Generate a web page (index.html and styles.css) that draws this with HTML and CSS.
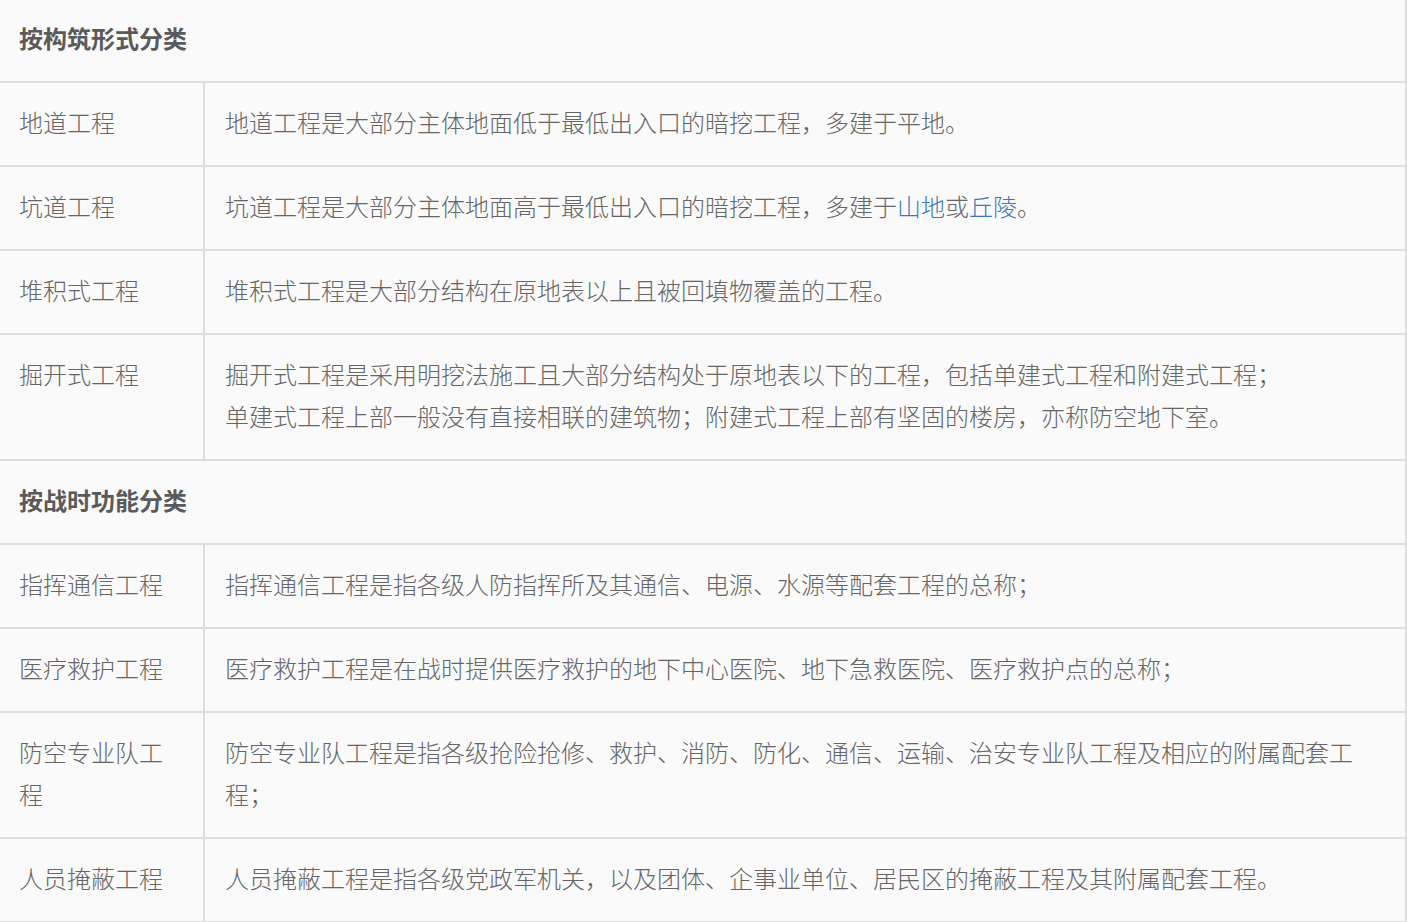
FILE: index.html
```html
<!DOCTYPE html>
<html lang="zh-CN">
<head>
    <meta charset="UTF-8">
    <meta name="viewport" content="width=device-width, initial-scale=1.0">
    <title>人防工程分类</title>
    <link rel="stylesheet" href="styles.css">
</head>
<body>

<table class="class-table">
    <colgroup>
        <col class="col-name">
        <col class="col-desc">
    </colgroup>
    <tr class="section">
        <td colspan="2">按构筑形式分类</td>
    </tr>
    <tr>
        <td class="name">地道工程</td>
        <td>地道工程是大部分主体地面低于最低出入口的暗挖工程，多建于平地。</td>
    </tr>
    <tr>
        <td class="name">坑道工程</td>
        <td>坑道工程是大部分主体地面高于最低出入口的暗挖工程，多建于<a href="#">山地</a>或<a href="#">丘陵</a>。</td>
    </tr>
    <tr>
        <td class="name">堆积式工程</td>
        <td>堆积式工程是大部分结构在原地表以上且被回填物覆盖的工程。</td>
    </tr>
    <tr>
        <td class="name">掘开式工程</td>
        <td>掘开式工程是采用明挖法施工且大部分结构处于原地表以下的工程，包括单建式工程和附建式工程；<br>单建式工程上部一般没有直接相联的建筑物；附建式工程上部有坚固的楼房，亦称防空地下室。</td>
    </tr>
    <tr class="section">
        <td colspan="2">按战时功能分类</td>
    </tr>
    <tr>
        <td class="name">指挥通信工程</td>
        <td>指挥通信工程是指各级人防指挥所及其通信、电源、水源等配套工程的总称；</td>
    </tr>
    <tr>
        <td class="name">医疗救护工程</td>
        <td>医疗救护工程是在战时提供医疗救护的地下中心医院、地下急救医院、医疗救护点的总称；</td>
    </tr>
    <tr>
        <td class="name">防空专业队工程</td>
        <td>防空专业队工程是指各级抢险抢修、救护、消防、防化、通信、运输、治安专业队工程及相应的附属配套工程；</td>
    </tr>
    <tr>
        <td class="name">人员掩蔽工程</td>
        <td>人员掩蔽工程是指各级党政军机关，以及团体、企事业单位、居民区的掩蔽工程及其附属配套工程。</td>
    </tr>
</table>

</body>
</html>
```

FILE: styles.css
```css
body {
    margin: 0;
    padding: 0;
    background-color: #fafafa;
    color: #666;
    font-family: "Noto Sans CJK SC", "Liberation Sans", sans-serif;
    font-size: 24px;
    overflow: hidden;
}
.class-table {
    width: 1407px;
    border-collapse: collapse;
    table-layout: fixed;
}
.col-name {
    width: 204px;
}
.class-table td {
    padding: 18px 20px 22px 19px;
    line-height: 42px;
    vertical-align: top;
    border-bottom: 2px solid #ddd;
    border-right: 2px solid #ddd;
    font-weight: 300;
}
.class-table td.name + td {
    padding-left: 20px;
}
.class-table tr:first-child td {
    padding-top: 17px;
}
.section td {
    font-weight: bold;
    color: #5a5a5a;
}
.class-table a {
    color: #3b78b8;
    text-decoration: none;
}
```
